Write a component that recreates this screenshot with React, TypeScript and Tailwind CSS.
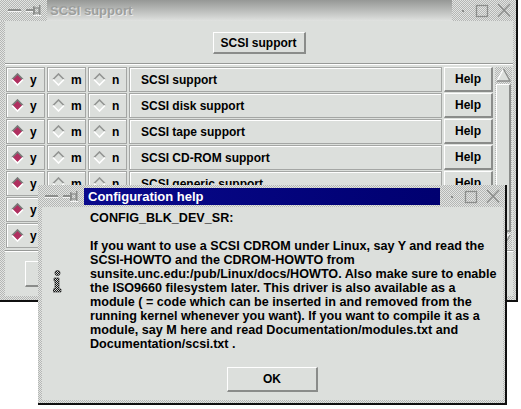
import React from "react";

const stipple =
  "bg-[repeating-conic-gradient(#b4b6b4_0%_25%,#e2e4e2_0%_50%)] bg-[length:2px_2px]";
const raised =
  "border-t border-l border-b-2 border-r-2 border-t-white border-l-white border-b-[#8a8c8a] border-r-[#8a8c8a]";

// rows 6 and 7 sit fully under the help dialog, only their "y" column peeks out
const rows = [
  "SCSI support",
  "SCSI disk support",
  "SCSI tape support",
  "SCSI CD-ROM support",
  "SCSI generic support",
  "",
  "",
];

const helpText = [
  "If you want to use a SCSI CDROM under Linux, say Y and read the",
  "SCSI-HOWTO and the CDROM-HOWTO from",
  "sunsite.unc.edu:/pub/Linux/docs/HOWTO. Also make sure to enable",
  "the ISO9660 filesystem later. This driver is also available as a",
  "module ( = code which can be inserted in and removed from the",
  "running kernel whenever you want). If you want to compile it as a",
  "module, say M here and read Documentation/modules.txt and",
  "Documentation/scsi.txt .",
];

function Diamond({ on }: { on: boolean }) {
  return (
    <svg width="13" height="13" viewBox="0 0 13 13" className="shrink-0">
      {on && <polygon points="6.5,1.5 11.5,6.5 6.5,11.5 1.5,6.5" fill="#b03060" />}
      <polyline points="1,6.5 6.5,1 12,6.5" fill="none" stroke={on ? "#767876" : "#929492"} strokeWidth="1.6" />
      <polyline points="1,6.5 6.5,12 12,6.5" fill="none" stroke="#ffffff" strokeWidth="1.6" />
    </svg>
  );
}

function LeftIcons() {
  return (
    <svg width="42" height="21" viewBox="0 0 42 21">
      <rect x="3" y="9" width="13" height="2" fill="#8c8e8c" />
      <rect x="3" y="11" width="13" height="1" fill="#f4f4f4" />
      <rect x="21" y="9" width="7" height="2" fill="#8c8e8c" />
      <rect x="21" y="11" width="7" height="1" fill="#f4f4f4" />
      <rect x="28" y="6" width="1.5" height="9" fill="#8c8e8c" />
      <rect x="29.5" y="8" width="4.5" height="5" fill="none" stroke="#8c8e8c" strokeWidth="1.2" />
      <rect x="34" y="5" width="1.5" height="11" fill="#8c8e8c" />
      <rect x="28" y="15" width="8" height="1" fill="#f4f4f4" />
    </svg>
  );
}

function RightIcons() {
  return (
    <svg width="64" height="21" viewBox="0 0 64 21">
      <rect x="10" y="10" width="2" height="2" fill="#8c8e8c" />
      <rect x="24.5" y="5.5" width="11" height="11" fill="none" stroke="#8c8e8c" strokeWidth="1.3" />
      <line x1="46" y1="4" x2="58" y2="16.5" stroke="#8c8e8c" strokeWidth="1.4" />
      <line x1="58" y1="4" x2="46" y2="16.5" stroke="#8c8e8c" strokeWidth="1.4" />
    </svg>
  );
}

function InfoIcon() {
  return (
    <svg width="9" height="23" viewBox="0 0 9 23">
      <defs>
        <pattern id="dith" width="2" height="2" patternUnits="userSpaceOnUse">
          <rect width="2" height="2" fill="#d8dad8" />
          <rect width="1" height="1" fill="#111" />
          <rect x="1" y="1" width="1" height="1" fill="#111" />
        </pattern>
      </defs>
      <circle cx="4.5" cy="3" r="2.6" fill="url(#dith)" stroke="#222" strokeWidth="0.6" />
      <path d="M1 8h5v11h2v3H0v-3h2v-8H1z" fill="url(#dith)" stroke="#222" strokeWidth="0.6" />
    </svg>
  );
}

function Cell({ letter, on }: { letter: string; on: boolean }) {
  return (
    <div className="w-[39px] h-[25px] flex items-center pl-[4px] gap-[6px] border border-[#a4a6a4] shadow-[inset_1px_1px_0_#fff]">
      <Diamond on={on} />
      <span className="text-[12px] font-bold">{letter}</span>
    </div>
  );
}

export default function App() {
  return (
    <div className="relative w-[521px] h-[409px] bg-white overflow-hidden font-['Liberation_Sans',Arial,sans-serif] text-black">
      {/* main window */}
      <div className="w-[518px] h-[302px] flex flex-col border-r-2 border-b-2 border-[#101010] bg-[#dcdfdc]">
        <div className="h-[21px] flex shrink-0">
          <div className={`w-[47px] pl-[5px] ${stipple}`}>
            <LeftIcons />
          </div>
          <div className="flex-1 flex items-center pl-[3px] bg-gradient-to-b from-[#969896] to-[#e0e2e0]">
            <span className="text-[13px] font-bold text-[#9c9e9c] [text-shadow:1px_1px_0_#e8e8e8]">SCSI support</span>
          </div>
          <div className={`w-[64px] ${stipple}`}>
            <RightIcons />
          </div>
        </div>

        <div className="flex flex-1">
          <div className={`w-[5px] ${stipple}`} />
          <div className="flex-1 flex flex-col">
            <div className="h-[42px] flex justify-center pt-[11px]">
              <div className={`w-[93px] h-[22px] flex items-center justify-center text-[12px] font-bold ${raised}`}>
                SCSI support
              </div>
            </div>
            <div className="border-t border-b border-t-[#979997] border-b-white" />

            <div className="flex mt-[2px] pl-[1px]">
              <div className="flex flex-col gap-[1px]">
                {rows.map((label, i) => {
                  const covered = i >= 5;
                  return (
                    <div key={i} className="flex gap-[2px]">
                      <Cell letter="y" on />
                      <Cell letter={covered ? "" : "m"} on={false} />
                      <Cell letter={covered ? "" : "n"} on={false} />
                      <div className="w-[313px] h-[25px] flex items-center pl-[11px] border border-[#a4a6a4] shadow-[inset_1px_1px_0_#fff] text-[12px] font-bold whitespace-nowrap overflow-hidden">
                        {label}
                      </div>
                      <div className={`w-[49px] h-[25px] flex items-center justify-center text-[12px] font-bold ${raised}`}>
                        {covered ? "" : "Help"}
                      </div>
                    </div>
                  );
                })}
              </div>
              <div className={`ml-[2px] w-[17px] h-[182px] flex flex-col ${stipple}`}>
                <div className="h-[16px] flex items-center justify-center">
                  <svg width="15" height="14" viewBox="0 0 15 14">
                    <polygon points="7.5,1 14,13 1,13" fill="#dcdfdc" />
                    <polyline points="1,13 7.5,1" stroke="#ffffff" strokeWidth="1.3" fill="none" />
                    <polyline points="7.5,1 14,13 1,13" stroke="#8a8c8a" strokeWidth="1.3" fill="none" />
                  </svg>
                </div>
                <div className={`flex-1 mx-[1px] my-[1px] bg-[#dcdfdc] ${raised}`} />
                <div className="h-[16px] flex items-center justify-center">
                  <svg width="15" height="14" viewBox="0 0 15 14">
                    <polygon points="1,1 14,1 7.5,13" fill="#dcdfdc" />
                    <polyline points="7.5,13 1,1 14,1" stroke="#ffffff" strokeWidth="1.3" fill="none" />
                    <polyline points="14,1 7.5,13" stroke="#8a8c8a" strokeWidth="1.3" fill="none" />
                  </svg>
                </div>
              </div>
            </div>

            <div className="mt-[1px] border-t border-b border-t-[#979997] border-b-white" />
            {/* bottom buttons, hidden under the dialog apart from the first edge */}
            <div className="flex-1 flex items-center gap-[40px] pl-[20px]">
              <div className={`w-[110px] h-[26px] ${raised}`} />
              <div className={`w-[110px] h-[26px] ${raised}`} />
              <div className={`w-[110px] h-[26px] ${raised}`} />
            </div>
            <div className={`h-[4px] ${stipple}`} />
          </div>
          <div className={`w-[3px] ${stipple}`} />
        </div>
      </div>

      {/* help dialog */}
      <div
        className={`absolute left-[38px] top-[185px] w-[469px] h-[220px] flex flex-col pl-[4px] pr-[2px] pb-[3px] border-r-2 border-b-2 border-[#101010] ${stipple}`}
      >
        <div className="h-[22px] flex items-center shrink-0">
          <div className="w-[42px] h-[21px]">
            <LeftIcons />
          </div>
          <div className="flex-1 h-[17px] flex items-center pl-[4px] bg-gradient-to-r from-[#0a0a8c] to-[#000070]">
            <span className="text-[13px] font-bold text-white leading-none">Configuration help</span>
          </div>
          <div className="w-[63px] h-[21px] pl-[1px]">
            <RightIcons />
          </div>
        </div>
        <div className="flex-1 bg-[#dcdfdc] flex flex-col pt-[4px]">
          <div className="flex items-center">
            <div className="w-[48px] pl-[11px] flex">
              <InfoIcon />
            </div>
            <div className="text-[12.6px] leading-[14px] font-bold whitespace-nowrap">
              <div>CONFIG_BLK_DEV_SR:</div>
              <div className="h-[14px]" />
              {helpText.map((line, i) => (
                <div key={i}>{line}</div>
              ))}
            </div>
          </div>
          <div className="flex justify-center mt-[16px]">
            <div className={`w-[91px] h-[25px] flex items-center justify-center text-[12px] font-bold ${raised}`}>
              OK
            </div>
          </div>
        </div>
      </div>
    </div>
  );
}
